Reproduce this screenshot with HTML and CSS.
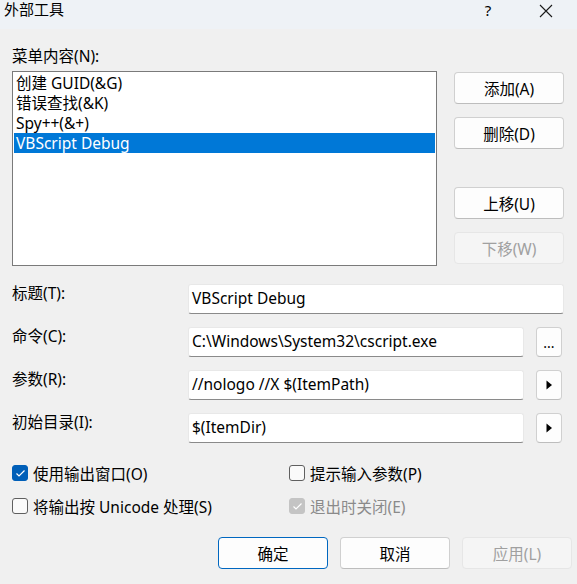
FILE: index.html
```html
<!DOCTYPE html>
<html lang="zh-CN">
<head>
<meta charset="utf-8">
<title>外部工具</title>
<link rel="stylesheet" href="styles.css">
</head>
<body>
<div class="dialog">
  <header class="titlebar">
    <span class="title">外部工具</span>
    <span class="help">?</span>
    <span class="close"><svg width="14" height="14" viewBox="0 0 14 14"><path d="M1 1L13 13M13 1L1 13" stroke="#1a1a1a" stroke-width="1.1" fill="none"/></svg></span>
  </header>
  <main class="content">
    <section class="top">
      <div class="field-label list-label">菜单内容(N):</div>
      <div class="listbox">
        <div class="item">创建 GUID(&amp;G)</div>
        <div class="item">错误查找(&amp;K)</div>
        <div class="item">Spy++(&amp;+)</div>
        <div class="item selected">VBScript Debug</div>
      </div>
      <div class="side-buttons">
        <button class="btn">添加(A)</button>
        <button class="btn">删除(D)</button>
        <button class="btn move-up">上移(U)</button>
        <button class="btn disabled">下移(W)</button>
      </div>
    </section>

    <section class="form">
      <div class="field-label">标题(T):</div>
      <div class="input wide">VBScript Debug</div>

      <div class="field-label">命令(C):</div>
      <div class="input">C:\Windows\System32\cscript.exe</div>
      <button class="btn small">...</button>

      <div class="field-label">参数(R):</div>
      <div class="input">//nologo //X $(ItemPath)</div>
      <button class="btn small"><svg width="8" height="12" viewBox="0 0 8 12"><path d="M1.5 1.5L7 6L1.5 10.5Z" fill="#000"/></svg></button>

      <div class="field-label">初始目录(I):</div>
      <div class="input">$(ItemDir)</div>
      <button class="btn small"><svg width="8" height="12" viewBox="0 0 8 12"><path d="M1.5 1.5L7 6L1.5 10.5Z" fill="#000"/></svg></button>
    </section>

    <section class="checks">
      <label class="check"><span class="box checked"><svg width="11" height="9" viewBox="0 0 11 9"><path d="M1.5 4.5L4 7L9.5 1.5" stroke="#fff" stroke-width="1.2" fill="none"/></svg></span>使用输出窗口(O)</label>
      <label class="check"><span class="box"></span>提示输入参数(P)</label>
      <label class="check"><span class="box"></span>将输出按 Unicode 处理(S)</label>
      <label class="check dim"><span class="box checked gray"><svg width="11" height="9" viewBox="0 0 11 9"><path d="M1.5 4.5L4 7L9.5 1.5" stroke="#fff" stroke-width="1.2" fill="none"/></svg></span>退出时关闭(E)</label>
    </section>

    <footer class="footer">
      <button class="btn default">确定</button>
      <button class="btn">取消</button>
      <button class="btn disabled">应用(L)</button>
    </footer>
  </main>
</div>
</body>
</html>
```

FILE: styles.css
```css
* { box-sizing: border-box; }
html, body { margin: 0; padding: 0; }
body {
  width: 577px;
  height: 584px;
  background: #f0f0f0;
  font-family: "Noto Sans", "Noto Sans CJK SC", sans-serif;
  font-size: 15.5px;
  color: #000;
  overflow: hidden;
}
.dialog { width: 577px; height: 584px; display: flex; flex-direction: column; }

.titlebar {
  height: 29px;
  background: #eef2f6;
  display: flex;
  align-items: center;
  padding-left: 4px;
  flex-shrink: 0;
}
.title { flex: 1; font-size: 15px; line-height: 20px; margin-top: -11px; }
.help { width: 20px; font-size: 15px; margin-top: -10px; margin-right: 38px; text-align: center; }
.close { width: 20px; margin-right: 21px; margin-top: -8px; display: flex; justify-content: center; }

.content { padding: 0 13px 0 12px; display: flex; flex-direction: column; }

.field-label { line-height: 20px; white-space: nowrap; }

.top {
  display: grid;
  grid-template-columns: 425px 110px;
  column-gap: 17px;
  grid-template-rows: auto 195px;
  margin-top: 17px;
}
.list-label { grid-column: 1 / -1; height: 25px; }
.listbox {
  background: #fff;
  border: 1px solid #7a7a7a;
  padding: 1px;
}
.item { height: 20px; line-height: 20px; padding-left: 2px; white-space: nowrap; }
.item.selected { background: #0078d7; color: #fff; }

.side-buttons { display: flex; flex-direction: column; padding-top: 1px; gap: 13px; }
.side-buttons .move-up { margin-top: 25px; }

.btn {
  height: 32px;
  width: 110px;
  border: 1px solid #d0d0d0;
  border-bottom-color: #bdbdbd;
  border-radius: 4px;
  background: #fdfdfd;
  font-family: inherit;
  font-size: 15.5px;
  color: #000;
  padding: 0;
  display: flex;
  align-items: center;
  justify-content: center;
  flex-shrink: 0;
}
.btn.disabled { background: #f5f5f5; border-color: #e6e6e6; color: #a0a0a0; }
.btn.default { border-color: #0067c0; }

.form {
  display: grid;
  grid-template-columns: 176px 336px 12px 28px;
  grid-auto-rows: 30px;
  row-gap: 13px;
  margin-top: 18px;
}
.form .field-label { margin-top: -1px; }
.input {
  grid-column: 2;
  background: #fff;
  border: 1px solid #e8e8e8;
  border-bottom: 1px solid #8a8a8a;
  border-radius: 3px;
  padding-left: 3px;
  line-height: 26px;
  white-space: nowrap;
  overflow: hidden;
}
.input.wide { grid-column: 2 / -1; }
.btn.small { grid-column: 4; width: 26px; height: 30px; font-size: 14px; }

.checks {
  display: grid;
  grid-template-columns: 277px 1fr;
  grid-auto-rows: 20px;
  row-gap: 13px;
  margin-top: 20px;
}
.check { display: flex; align-items: center; gap: 5px; white-space: nowrap; }
.check.dim { color: #8a8a8a; }
.box {
  width: 16px;
  height: 16px;
  border: 1px solid #5f5f5f;
  border-radius: 3px;
  background: #fafafa;
  display: flex;
  align-items: center;
  justify-content: center;
  flex-shrink: 0;
}
.box.checked { background: #005fb8; border-color: #005fb8; }
.box.checked.gray { background: #c4c4c4; border-color: #c4c4c4; }

.footer {
  display: flex;
  justify-content: flex-end;
  gap: 12px;
  margin-top: 21px;
  margin-right: -8px;
}
```
